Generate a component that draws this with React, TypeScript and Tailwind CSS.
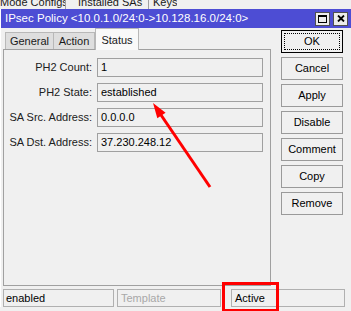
const fields = [
  { label: "PH2 Count:", value: "1" },
  { label: "PH2 State:", value: "established" },
  { label: "SA Src. Address:", value: "0.0.0.0" },
  { label: "SA Dst. Address:", value: "37.230.248.12" },
]

const buttons = ["OK", "Cancel", "Apply", "Disable", "Comment", "Copy", "Remove"]

export default function App() {
  return (
    <div className="relative w-[351px] h-[311px] overflow-hidden bg-[#f0f0f0] text-[11px] text-[#1a1a1a] font-['Liberation_Sans',Arial,sans-serif]">
      {/* window behind, only its tab strip shows */}
      <div className="h-[9px] overflow-hidden flex items-start whitespace-nowrap leading-[13px]">
        <div className="w-[66px] h-[9px] overflow-hidden border-r border-[#a0a0a0]">
          <div className="-mt-[4px]">Mode Configs</div>
        </div>
        <div className="w-[83px] h-[9px] overflow-hidden pl-[12px] border-r border-[#a0a0a0]">
          <div className="-mt-[4px]">Installed SAs</div>
        </div>
        <div className="h-[9px] overflow-hidden pl-[4px]">
          <div className="-mt-[4px]">Keys</div>
        </div>
      </div>

      <div className="border-l border-white">
        {/* title bar */}
        <div className="h-[19px] bg-[#4d4dd4] flex items-center pl-[4px] pr-[3px] text-white text-[11.5px] whitespace-nowrap">
          <span>IPsec Policy &lt;10.0.1.0/24:0-&gt;10.128.16.0/24:0&gt;</span>
          <div className="ml-auto flex gap-[3px]">
            <div className="w-[15px] h-[14px] bg-[#ececec] border border-[#505050] flex items-center justify-center">
              <svg width="9" height="8" viewBox="0 0 9 8">
                <rect x="0.5" y="0.5" width="8" height="7" fill="none" stroke="#000" />
                <rect x="0" y="0" width="9" height="2" fill="#000" />
              </svg>
            </div>
            <div className="w-[15px] h-[14px] bg-[#ececec] border border-[#505050] flex items-center justify-center">
              <svg width="8" height="7" viewBox="0 0 8 7">
                <path d="M1 0.5 L7 6.5 M7 0.5 L1 6.5" stroke="#000" strokeWidth="1.8" />
              </svg>
            </div>
          </div>
        </div>

        <div className="flex h-[258px]">
          {/* tabs + panel */}
          <div className="ml-[2px] w-[268px] flex flex-col">
            <div className="h-[21px] flex items-end pl-[2px]">
              <div className="w-[49px] h-[17px] bg-[#dedede] border border-b-0 border-[#b8b8b8] flex items-center justify-center">
                General
              </div>
              <div className="w-[41px] h-[17px] bg-[#dedede] border border-b-0 border-l-0 border-[#b8b8b8] flex items-center justify-center">
                Action
              </div>
              <div className="relative z-10 -mb-px w-[44px] h-[22px] bg-[#f9f9f9] border border-b-0 border-[#b8b8b8] flex items-start justify-center pt-[3px]">
                Status
              </div>
            </div>
            <div className="h-[237px] border border-[#a0a0a0] bg-[#f0f0f0] pt-[8px] flex flex-col gap-[6px]">
              {fields.map((f) => (
                <div key={f.label} className="flex items-center h-[19px]">
                  <span className="w-[88px] text-right text-[#202020] whitespace-nowrap">{f.label}</span>
                  <div className="ml-[5px] w-[166px] h-[19px] border border-[#a0a0a0] bg-[#f0f0f0] pl-[3px] flex items-center text-black">
                    {f.value}
                  </div>
                </div>
              ))}
            </div>
          </div>

          {/* buttons */}
          <div className="ml-[10px] mt-[2px] flex flex-col gap-[4px]">
            {buttons.map((b, i) =>
              i === 0 ? (
                <div key={b} className="w-[62px] h-[23px] border border-black bg-[#f0f0f0] p-[2px]">
                  <div className="h-full border border-dotted border-black flex items-center justify-center text-black">{b}</div>
                </div>
              ) : (
                <div key={b} className="w-[62px] h-[23px] border border-[#9a9a9a] bg-[#f0f0f0] flex items-center justify-center text-black">
                  {b}
                </div>
              )
            )}
          </div>
        </div>

        {/* status bar */}
        <div className="mt-[3px] flex h-[18px]">
          <div className="ml-[2px] w-[111px] border border-[#b0b0b0] pl-[2px] flex items-center text-black">enabled</div>
          <div className="ml-[3px] w-[104px] border border-[#b0b0b0] pl-[3px] flex items-center text-[#a8a8a8]">Template</div>
          <div className="ml-[10px] w-[114px] border border-[#b0b0b0] pl-[3px] flex items-center text-black">Active</div>
        </div>
      </div>

      {/* annotations */}
      <div className="absolute left-[222px] top-[282px] w-[57px] h-[30px] border-[3px] border-[#ff0000]" />
      <svg className="absolute left-0 top-0 pointer-events-none" width="351" height="311">
        <line x1="210" y1="187" x2="161" y2="115" stroke="#ff0000" strokeWidth="3" />
        <polygon points="153,103 165.6,112.7 157.3,118.3" fill="#ff0000" />
      </svg>
    </div>
  )
}
